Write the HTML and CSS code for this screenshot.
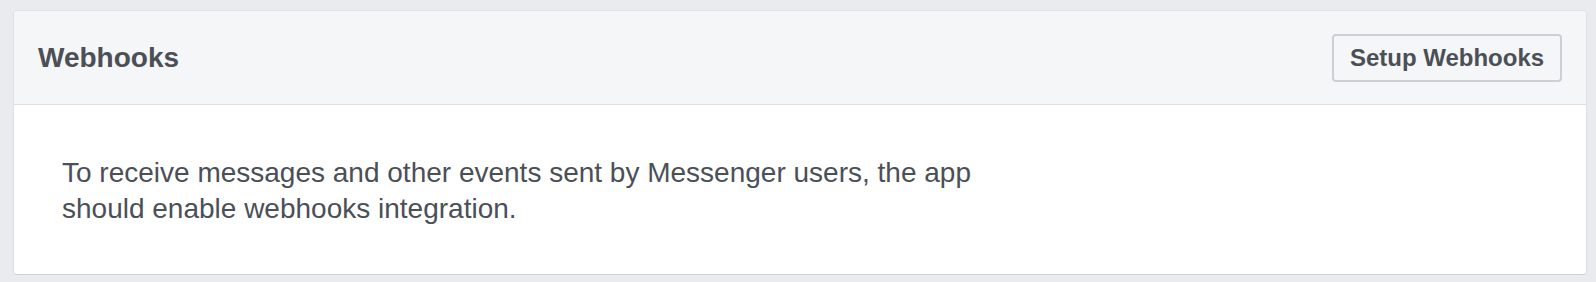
FILE: index.html
```html
<!DOCTYPE html>
<html>
<head>
<meta charset="utf-8">
<link rel="stylesheet" href="styles.css">
</head>
<body>
<div class="card">
  <div class="card-header">
    <h2 class="card-title">Webhooks</h2>
    <button class="btn">Setup Webhooks</button>
  </div>
  <div class="card-body">
    <p class="desc">To receive messages and other events sent by Messenger users, the app should enable webhooks integration.</p>
  </div>
</div>
</body>
</html>
```
FILE: styles.css
```css
html, body {
  margin: 0;
  padding: 0;
  background: #e9ebee;
  font-family: "Liberation Sans", Arial, Helvetica, sans-serif;
  color: #4b4f56;
}
.card {
  margin: 10px 9px 0 13px;
  background: #fff;
  border: 1px solid #dddfe2;
  border-bottom-color: #d0d1d5;
  border-radius: 4px;
  overflow: hidden;
  height: 265px;
  box-sizing: border-box;
}
.card-header {
  display: flex;
  align-items: center;
  justify-content: space-between;
  height: 94px;
  box-sizing: border-box;
  padding: 0 24px 0 24px;
  background: #f5f6f7;
  border-bottom: 1px solid #dddfe2;
}
.card-title {
  margin: 0;
  font-size: 28px;
  font-weight: bold;
  color: #4b4f56;
  line-height: 32px;
}
.btn {
  font-family: "Liberation Sans", Arial, Helvetica, sans-serif;
  font-size: 24px;
  font-weight: bold;
  color: #4b4f56;
  background: #f5f6f7;
  border: 2px solid #ccd0d5;
  border-radius: 4px;
  height: 48px;
  width: 230px;
  padding: 0;
  margin-top: 1px;
}
.card-body {
  padding: 50px 48px 0 48px;
}
.desc {
  margin: 0;
  font-size: 28px;
  line-height: 36px;
  max-width: 930px;
}
```
